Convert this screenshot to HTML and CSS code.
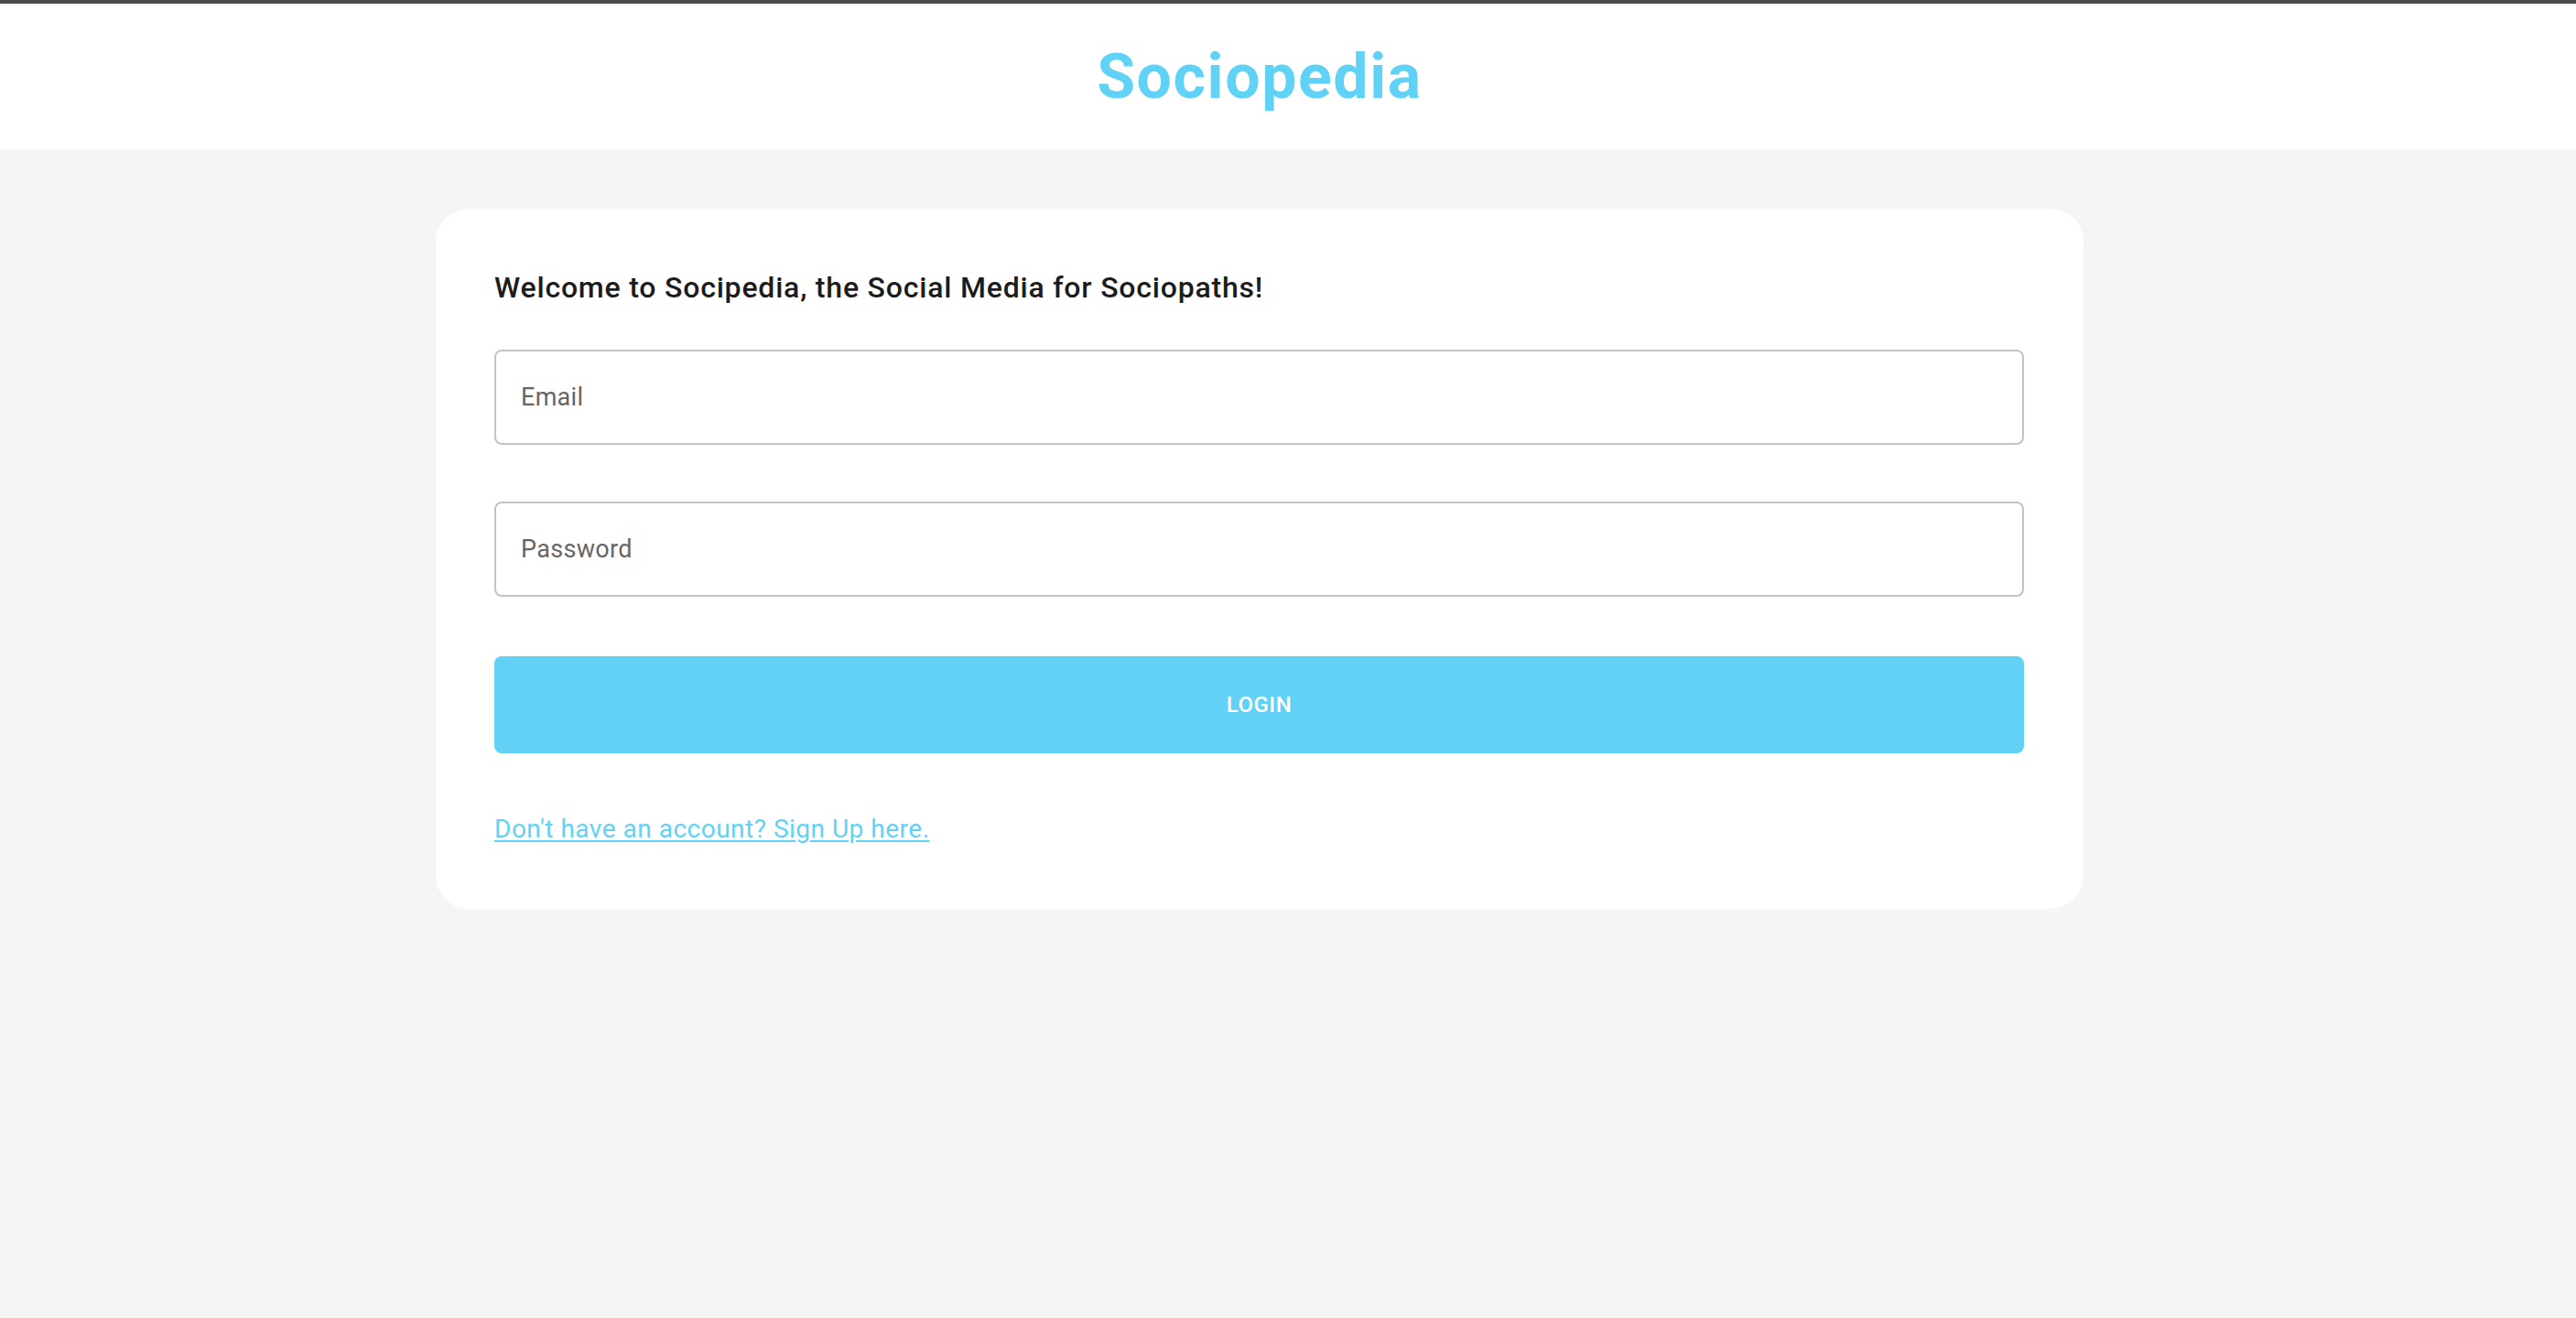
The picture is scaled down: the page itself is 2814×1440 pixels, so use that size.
FILE: index.html
```html
<!DOCTYPE html>
<html lang="en">
<head>
<meta charset="utf-8">
<title>Sociopedia</title>
<link rel="stylesheet" href="styles.css">
</head>
<body>
<header class="topbar">
  <h1 class="brand">Sociopedia</h1>
</header>
<main class="page">
  <section class="card">
    <h2 class="welcome">Welcome to Socipedia, the Social Media for Sociopaths!</h2>
    <form class="form">
      <div class="field"><span class="placeholder">Email</span></div>
      <div class="field"><span class="placeholder">Password</span></div>
      <button type="button" class="login">LOGIN</button>
      <a class="signup" href="#">Don't have an account? Sign Up here.</a>
    </form>
  </section>
</main>
</body>
</html>
```

FILE: styles.css
```css
html, body {
  margin: 0;
  padding: 0;
}
body {
  background: #f5f5f5;
  font-family: Roboto, "Liberation Sans", sans-serif;
  min-height: 1440px;
}
.topbar {
  border-top: 4px solid #4a4a4a;
  background: #ffffff;
  height: 160px;
  display: flex;
  align-items: center;
  justify-content: center;
  padding-right: 62px;
}
.brand {
  margin: 0;
  font-size: 68px;
  font-weight: 700;
  color: #5fd2f5;
  line-height: 1;
  letter-spacing: 1.6px;
}
.page {
  padding: 64px 0 0 476px;
}
.card {
  width: 1800px;
  box-sizing: border-box;
  background: #ffffff;
  border-radius: 36px;
  padding: 67px 65px 71px 64px;
}
.welcome {
  margin: 0;
  font-size: 32px;
  font-weight: 500;
  color: #1c1c1c;
  line-height: 1.2;
  letter-spacing: 0.8px;
}
.form {
  display: flex;
  flex-direction: column;
  margin-top: 49px;
}
.field {
  height: 104px;
  box-sizing: border-box;
  border: 2px solid #c4c4c4;
  border-radius: 8px;
  display: flex;
  align-items: center;
  padding-left: 27px;
  margin-bottom: 62px;
}
.field + .field {
  margin-bottom: 65px;
}
.placeholder {
  font-size: 27px;
  color: #666666;
  letter-spacing: 0.3px;
}
.login {
  height: 106px;
  border: none;
  border-radius: 8px;
  background: #61d1f5;
  color: #ffffff;
  font-family: Roboto, "Liberation Sans", sans-serif;
  font-size: 24px;
  font-weight: 500;
  letter-spacing: 0.5px;
}
.signup {
  margin-top: 66px;
  align-self: flex-start;
  font-size: 28px;
  color: #5fd2f5;
  text-decoration: underline;
  text-underline-offset: 3px;
  letter-spacing: 0.5px;
}
```
